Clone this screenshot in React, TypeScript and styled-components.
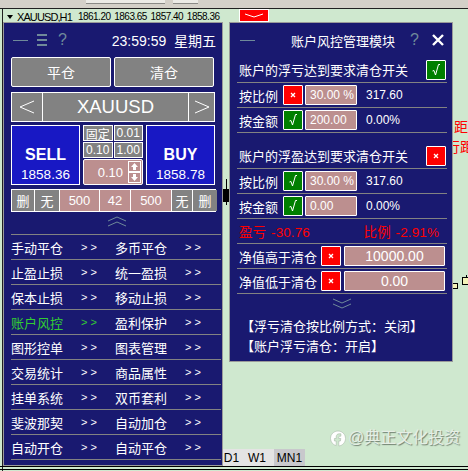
import React from 'react';
import styled, { createGlobalStyle } from 'styled-components';

const GlobalStyle = createGlobalStyle`
  html, body {
    margin: 0;
    padding: 0;
    background: #cfe8cf;
  }
  body {
    font-family: "Liberation Sans", "Noto Sans CJK SC", sans-serif;
  }
`;

const NAVY = '#191970';
const SLATE = '#828282';
const ROSE = '#bc8f8f';

const menuRows: [string, string][] = [
  ['手动平仓', '多币平仓'],
  ['止盈止损', '统一盈损'],
  ['保本止损', '移动止损'],
  ['账户风控', '盈利保护'],
  ['图形控单', '图表管理'],
  ['交易统计', '商品属性'],
  ['挂单系统', '双币套利'],
  ['斐波那契', '自动加仓'],
  ['自动开仓', '自动平仓'],
];

const Check = ({ on }: { on: boolean }) => (
  <Toggle $on={on}>
    {on ? (
      <svg width="10" height="14" viewBox="0 0 10 14">
        <path d="M1.5 8 L3 7.5 L4.5 12 L7.5 1.5 H9" fill="none" stroke="#fff" strokeWidth="1" />
      </svg>
    ) : (
      <svg width="6" height="6" viewBox="0 0 6 6">
        <path d="M1 1 L5 5 M5 1 L1 5" stroke="#fff" strokeWidth="1.3" />
      </svg>
    )}
  </Toggle>
);

const Chevrons = ({ up }: { up?: boolean }) => (
  <svg width="20" height="11" viewBox="0 0 20 11">
    <path
      d={up ? 'M1 5 L10 1 L19 5 M1 10 L10 6 L19 10' : 'M1 1 L10 5 L19 1 M1 6 L10 10 L19 6'}
      fill="none"
      stroke="#6f8a9a"
      strokeWidth="1"
    />
  </svg>
);

export default function App() {
  return (
    <Page>
      <GlobalStyle />
      <Toolbar>
        <ToolField $w={79} $ml={86} />
        <ToolField $w={25} $ml={8} />
      </Toolbar>
      <ChartTitle>
        <Caret />
        <span>XAUUSD,H1</span>
        <Ohlc>1861.20 1863.65 1857.40 1858.36</Ohlc>
      </ChartTitle>
      <RedMarker>
        <svg width="26" height="10" viewBox="0 0 26 10">
          <path d="M4 3 L13 6 L22 3" fill="none" stroke="#fff" strokeWidth="1" />
        </svg>
      </RedMarker>

      <Candle />
      <SideLabel $top={119}>距</SideLabel>
      <SideLabel $top={139} $left={446}>行距</SideLabel>
      <SmallBox />
      <YellowBox />

      <LeftPanel>
        <TopBar>
          <Dash />
          <Burger>
            <i />
            <i />
            <i />
          </Burger>
          <Help>?</Help>
          <Clock>23:59:59 &nbsp;星期五</Clock>
        </TopBar>

        <TwoButtons>
          <GreyButton>平仓</GreyButton>
          <GreyButton>清仓</GreyButton>
        </TwoButtons>

        <SymbolRow>
          <SymbolCell>
            <svg width="16" height="14" viewBox="0 0 16 14">
              <path d="M15 1 L1 7 L15 13" fill="none" stroke="#fff" strokeWidth="1" />
            </svg>
          </SymbolCell>
          <SymbolCell>XAUUSD</SymbolCell>
          <SymbolCell>
            <svg width="16" height="14" viewBox="0 0 16 14">
              <path d="M1 1 L15 7 L1 13" fill="none" stroke="#fff" strokeWidth="1" />
            </svg>
          </SymbolCell>
        </SymbolRow>

        <TradeRow>
          <TradeButton>
            <strong>SELL</strong>
            <span>1858.36</span>
          </TradeButton>
          <LotColumn>
            <LotGrid>
              <LotCell>固定</LotCell>
              <LotCell>0.01</LotCell>
              <LotCell>0.10</LotCell>
              <LotCell>1.00</LotCell>
            </LotGrid>
            <LotInput>
              <span>0.10</span>
              <Stepper>
                <StepButton>
                  <svg width="7" height="7" viewBox="0 0 7 7">
                    <path d="M3.5 0 L7 4 H5 V7 H2 V4 H0 Z" fill="#fff" />
                  </svg>
                </StepButton>
                <StepButton>
                  <svg width="7" height="7" viewBox="0 0 7 7">
                    <path d="M2 0 H5 V3 H7 L3.5 7 L0 3 H2 Z" fill="#fff" />
                  </svg>
                </StepButton>
              </Stepper>
            </LotInput>
          </LotColumn>
          <TradeButton>
            <strong>BUY</strong>
            <span>1858.78</span>
          </TradeButton>
        </TradeRow>

        <StopRow>
          <StopCell>删</StopCell>
          <StopCell>无</StopCell>
          <StopCell $rose>500</StopCell>
          <StopCell $rose>42</StopCell>
          <StopCell $rose>500</StopCell>
          <StopCell>无</StopCell>
          <StopCell>删</StopCell>
        </StopRow>

        <ChevronSlot $h={17}>
          <Chevrons up />
        </ChevronSlot>

        <Menu>
          {menuRows.map(([a, b]) => (
            <MenuRow key={a}>
              <MenuLabel $active={a === '账户风控'}>{a}</MenuLabel>
              <MenuArrow $active={a === '账户风控'}>&gt; &gt;</MenuArrow>
              <MenuLabel>{b}</MenuLabel>
              <MenuArrow>&gt; &gt;</MenuArrow>
            </MenuRow>
          ))}
        </Menu>
      </LeftPanel>

      <RightPanel>
        <RiskHeader>
          <Dash />
          <RiskTitle>账户风控管理模块</RiskTitle>
          <Help>?</Help>
          <CloseMark>
            <svg width="12" height="12" viewBox="0 0 12 12">
              <path d="M1 1 L11 11 M11 1 L1 11" stroke="#fff" strokeWidth="2.4" />
            </svg>
          </CloseMark>
        </RiskHeader>

        <SwitchRow>
          <span>账户的浮亏达到要求清仓开关</span>
          <Check on />
        </SwitchRow>
        <ValueRow>
          <RowLabel>按比例</RowLabel>
          <Check on={false} />
          <ValueBox>30.00 %</ValueBox>
          <Reading>317.60</Reading>
        </ValueRow>
        <ValueRow>
          <RowLabel>按金额</RowLabel>
          <Check on />
          <ValueBox>200.00</ValueBox>
          <Reading>0.00%</Reading>
        </ValueRow>

        <SwitchRow $second>
          <span>账户的浮盈达到要求清仓开关</span>
          <Check on={false} />
        </SwitchRow>
        <ValueRow>
          <RowLabel>按比例</RowLabel>
          <Check on />
          <ValueBox>30.00 %</ValueBox>
          <Reading>317.60</Reading>
        </ValueRow>
        <ValueRow>
          <RowLabel>按金额</RowLabel>
          <Check on />
          <ValueBox>0.00</ValueBox>
          <Reading>0.00%</Reading>
        </ValueRow>

        <ProfitRow>
          <span>盈亏 -30.76</span>
          <span>比例 -2.91%</span>
        </ProfitRow>

        <EquityRow>
          <EquityLabel>净值高于清仓</EquityLabel>
          <Check on={false} />
          <EquityBox>10000.00</EquityBox>
        </EquityRow>
        <EquityRow>
          <EquityLabel>净值低于清仓</EquityLabel>
          <Check on={false} />
          <EquityBox>0.00</EquityBox>
        </EquityRow>

        <ChevronSlot $h={13}>
          <Chevrons />
        </ChevronSlot>

        <Notes>
          <p>【浮亏清仓按比例方式：关闭】</p>
          <p>【账户浮亏清仓：开启】</p>
        </Notes>
      </RightPanel>

      <Watermark>
        <svg width="16" height="17" viewBox="0 0 16 16">
          <path
            d="M8 0.5 C3.8 0.5 0.5 3.8 0.5 8 C0.5 11.5 3 14.3 6.2 15.2 V10.5 H4.4 V8 H6.2 V6.4 C6.2 4.4 7.4 3.3 9.2 3.3 H10.9 V5.7 H9.8 C9 5.7 8.8 6.1 8.8 6.7 V8 H10.8 L10.4 10.5 H8.8 V15.5 C12.5 15.1 15.5 11.9 15.5 8 C15.5 3.8 12.2 0.5 8 0.5 Z"
            fill="#fff"
            stroke="#a9b8a9"
            strokeWidth="0.6"
          />
        </svg>
        <span>@典正文化投资</span>
      </Watermark>

      <Periods>
        <Period $w={17}>D1</Period>
        <Period $w={34}>W1</Period>
        <Period $w={31} $active>MN1</Period>
      </Periods>
      <BottomRule />
    </Page>
  );
}

const Page = styled.div`
  position: relative;
  width: 468px;
  height: 471px;
  overflow: hidden;
  background: #cfe8cf;
  &::before {
    content: '';
    position: absolute;
    left: 2px;
    top: 8px;
    bottom: 0;
    width: 1px;
    background: #202020;
  }
`;

const Toolbar = styled.div`
  display: flex;
  height: 8px;
  background: #d4d0c8;
  border-bottom: 1px solid #202020;
`;

const ToolField = styled.i<{ $w: number; $ml: number }>`
  width: ${(p) => p.$w}px;
  height: 3px;
  margin-left: ${(p) => p.$ml}px;
  background: #ecebe6;
  border-bottom: 1px solid #8a8a86;
`;

const ChartTitle = styled.div`
  display: flex;
  align-items: center;
  height: 13px;
  margin-top: 1px;
  padding-left: 7px;
  font-size: 11px;
  letter-spacing: -0.9px;
  color: #000;
  white-space: nowrap;
`;

const Caret = styled.i`
  width: 0;
  height: 0;
  margin-right: 4px;
  border-left: 3px solid transparent;
  border-right: 3px solid transparent;
  border-top: 4px solid #000;
`;

const Ohlc = styled.span`
  margin-left: 6px;
  font-size: 10px;
  letter-spacing: -0.5px;
  word-spacing: 1.4px;
`;

const RedMarker = styled.div`
  position: absolute;
  left: 239px;
  top: 9px;
  width: 30px;
  height: 13px;
  display: flex;
  align-items: center;
  justify-content: center;
  background: #ff0000;
  border: 1px solid #fff;
  box-sizing: border-box;
`;

const Candle = styled.div`
  position: absolute;
  left: 223px;
  top: 189px;
  width: 6px;
  height: 13px;
  background: #000;
  &::after {
    content: '';
    position: absolute;
    left: 3px;
    top: -10px;
    width: 1px;
    height: 26px;
    background: #000;
  }
`;

const SideLabel = styled.div<{ $top: number; $left?: number }>`
  position: absolute;
  left: ${(p) => p.$left ?? 454}px;
  top: ${(p) => p.$top}px;
  font-size: 14px;
  line-height: 16px;
  color: #ff0000;
  white-space: nowrap;
`;

const SmallBox = styled.div`
  position: absolute;
  left: 452px;
  top: 283px;
  width: 4px;
  height: 4px;
  background: #f2f2b8;
  border: 1px solid #000;
`;

const YellowBox = styled.div`
  position: absolute;
  left: 462px;
  top: 277px;
  width: 8px;
  height: 6px;
  background: #f2f2b8;
  border: 1px solid #000;
  &::before {
    content: '';
    position: absolute;
    left: 3px;
    top: -3px;
    width: 1px;
    height: 2px;
    background: #000;
  }
`;

const LeftPanel = styled.div`
  position: absolute;
  left: 3px;
  top: 22px;
  width: 220px;
  height: 444px;
  box-sizing: border-box;
  padding: 0 0 0 7px;
  background: ${NAVY};
  border: 1px solid #9a9a9a;
  color: #fff;
`;

const TopBar = styled.div`
  display: flex;
  align-items: center;
  height: 34px;
  padding: 0 3px 0 2px;
`;

const Dash = styled.i`
  width: 15px;
  height: 1px;
  background: #6f8a9a;
`;

const Burger = styled.div`
  display: flex;
  flex-direction: column;
  gap: 3px;
  margin-left: 9px;
  i {
    width: 10px;
    height: 2px;
    background: #6f8a9a;
  }
`;

const Help = styled.span`
  margin-left: 11px;
  font-size: 16px;
  line-height: 16px;
  color: #6f8a9a;
`;

const Clock = styled.span`
  margin-left: auto;
  font-size: 14px;
  white-space: nowrap;
  margin-right: 3px;
`;

const TwoButtons = styled.div`
  display: flex;
  gap: 3px;
  width: 203px;
`;

const GreyButton = styled.div`
  flex: 1;
  height: 30px;
  display: flex;
  align-items: center;
  justify-content: center;
  box-sizing: border-box;
  background: ${SLATE};
  border: 1px solid #fff;
  border-radius: 2px;
  font-size: 14px;
`;

const SymbolRow = styled.div`
  display: grid;
  grid-template-columns: 30px 146px 26px;
  width: 204px;
  height: 30px;
  margin-top: 5px;
  box-sizing: border-box;
  background: ${SLATE};
  border: 1px solid #fff;
`;

const SymbolCell = styled.div`
  display: flex;
  align-items: center;
  justify-content: center;
  font-size: 18.5px;
  & + & {
    border-left: 1px solid #fff;
  }
`;

const TradeRow = styled.div`
  display: grid;
  grid-template-columns: 69px 60px 69px;
  column-gap: 3px;
  width: 204px;
  height: 60px;
  margin-top: 3px;
`;

const TradeButton = styled.div`
  display: flex;
  flex-direction: column;
  align-items: center;
  box-sizing: border-box;
  background: #1818c4;
  border: 1px solid #fff;
  padding-top: 20px;
  strong {
    font-size: 16px;
    line-height: 18px;
  }
  span {
    margin-top: 3px;
    font-size: 13.5px;
    line-height: 16px;
  }
`;

const LotColumn = styled.div`
  display: flex;
  flex-direction: column;
  gap: 1px;
`;

const LotGrid = styled.div`
  display: grid;
  grid-template-columns: 1fr 1fr;
  grid-auto-rows: 16px;
  gap: 1px;
  height: 33px;
`;

const LotCell = styled.div`
  display: flex;
  align-items: center;
  justify-content: center;
  box-sizing: border-box;
  background: ${SLATE};
  border: 1px solid #fff;
  font-size: 12px;
`;

const LotInput = styled.div`
  flex: 1;
  display: flex;
  align-items: center;
  justify-content: flex-end;
  gap: 5px;
  padding-right: 1px;
  box-sizing: border-box;
  background: ${ROSE};
  border: 1px solid #fff;
  border-radius: 2px;
  font-size: 13px;
`;

const Stepper = styled.div`
  display: flex;
  flex-direction: column;
`;

const StepButton = styled.div`
  width: 13px;
  height: 11px;
  display: flex;
  align-items: center;
  justify-content: center;
  background: ${ROSE};
  border: 1px solid #fff;
  box-sizing: border-box;
`;

const StopRow = styled.div`
  display: grid;
  grid-template-columns: 22px 25px 40px 31px 41px 21px 25px;
  width: 205px;
  height: 23px;
  margin-top: 4px;
  box-sizing: border-box;
  border: 1px solid #fff;
`;

const StopCell = styled.div<{ $rose?: boolean }>`
  display: flex;
  align-items: center;
  justify-content: center;
  font-size: 13px;
  background: ${(p) => (p.$rose ? ROSE : SLATE)};
  & + & {
    border-left: 1px solid #fff;
  }
`;

const ChevronSlot = styled.div<{ $h: number }>`
  display: flex;
  justify-content: center;
  height: ${(p) => p.$h}px;
  padding-top: 4px;
  box-sizing: border-box;
`;

const Menu = styled.div`
  width: 210px;
  border-top: 1px solid #828282;
  margin-top: 5px;
`;

const MenuRow = styled.div`
  display: grid;
  grid-template-columns: 70px 34px 70px 36px;
  align-items: center;
  height: 25px;
  box-sizing: border-box;
  border-bottom: 1px solid #828282;
`;

const MenuLabel = styled.span<{ $active?: boolean }>`
  font-size: 13px;
  color: ${(p) => (p.$active ? '#32cd32' : '#fff')};
`;

const MenuArrow = styled.span<{ $active?: boolean }>`
  font-size: 11px;
  color: ${(p) => (p.$active ? '#32cd32' : '#fff')};
`;

const RightPanel = styled.div`
  position: absolute;
  left: 229px;
  top: 22px;
  width: 224px;
  height: 340px;
  box-sizing: border-box;
  padding: 0 5px 0 7px;
  background: ${NAVY};
  border: 1px solid #9a9a9a;
  color: #fff;
`;

const RiskHeader = styled.div`
  display: flex;
  align-items: center;
  height: 34px;
  padding-left: 3px;
  ${Help} {
    margin-left: 15px;
  }
`;

const RiskTitle = styled.span`
  margin-left: 36px;
  font-size: 13px;
  white-space: nowrap;
`;

const CloseMark = styled.span`
  display: flex;
  margin-left: 13px;
`;

const SwitchRow = styled.div<{ $second?: boolean }>`
  display: flex;
  align-items: center;
  justify-content: space-between;
  height: 26px;
  margin-top: ${(p) => (p.$second ? '10px' : '0')};
  padding: 0 1px 0 2px;
  font-size: 13px;
  white-space: nowrap;
  border-bottom: 1px solid #828282;
  box-sizing: border-box;
`;

const Toggle = styled.span<{ $on: boolean }>`
  display: flex;
  align-items: center;
  justify-content: center;
  flex: none;
  width: 20px;
  height: 20px;
  box-sizing: border-box;
  background: ${(p) => (p.$on ? '#007f00' : '#ff0000')};
  border: 1px solid #fff;
  border-radius: 1px;
`;

const ValueRow = styled.div`
  display: flex;
  align-items: center;
  height: 25px;
  box-sizing: border-box;
  padding-left: 2px;
  font-size: 13px;
  border-bottom: 1px solid #828282;
`;

const RowLabel = styled.span`
  width: 44px;
  white-space: nowrap;
`;

const ValueBox = styled.span`
  width: 52px;
  height: 20px;
  margin-left: 2px;
  padding-left: 4px;
  display: flex;
  align-items: center;
  box-sizing: border-box;
  background: ${ROSE};
  border: 1px solid #fff;
  border-radius: 1px;
  font-size: 12px;
  white-space: nowrap;
`;

const Reading = styled.span`
  margin-left: 9px;
  font-size: 12px;
`;

const ProfitRow = styled.div`
  display: flex;
  justify-content: space-between;
  align-items: center;
  height: 25px;
  box-sizing: border-box;
  padding: 0 8px 0 2px;
  font-size: 13.5px;
  letter-spacing: 0.1px;
  word-spacing: 1px;
  color: #ff0000;
  border-bottom: 1px solid #828282;
`;

const EquityRow = styled.div`
  display: flex;
  align-items: center;
  height: 25px;
  box-sizing: border-box;
  padding-left: 2px;
  border-bottom: 1px solid #828282;
`;

const EquityLabel = styled.span`
  width: 82px;
  font-size: 13px;
  white-space: nowrap;
`;

const EquityBox = styled.span`
  width: 101px;
  height: 20px;
  margin-left: 3px;
  display: flex;
  align-items: center;
  justify-content: center;
  box-sizing: border-box;
  background: ${ROSE};
  border: 1px solid #fff;
  border-radius: 1px;
  font-size: 14px;
`;

const Notes = styled.div`
  padding: 11px 0 0 4px;
  font-size: 13px;
  p {
    margin: 0 0 3px;
    line-height: 17px;
    white-space: nowrap;
  }
`;

const Watermark = styled.div`
  position: absolute;
  left: 330px;
  top: 429px;
  display: flex;
  align-items: center;
  gap: 2px;
  font-size: 16px;
  line-height: 18px;
  color: #e6efe6;
  text-shadow: 1px 1px 1px #6f7f6f;
  white-space: nowrap;
`;

const Periods = styled.div`
  position: absolute;
  left: 223px;
  top: 449px;
  display: flex;
  height: 17px;
`;

const Period = styled.span<{ $active?: boolean; $w: number }>`
  display: flex;
  align-items: center;
  justify-content: center;
  width: ${(p) => p.$w}px;
  font-size: 12px;
  color: #000;
  background: ${(p) => (p.$active ? '#c8c8cc' : '#e4e4e4')};
`;

const BottomRule = styled.div`
  position: absolute;
  left: 0;
  right: 0;
  top: 466px;
  height: 4px;
  box-sizing: border-box;
  border-top: 1px solid #000;
  border-bottom: 1px solid #000;
`;
